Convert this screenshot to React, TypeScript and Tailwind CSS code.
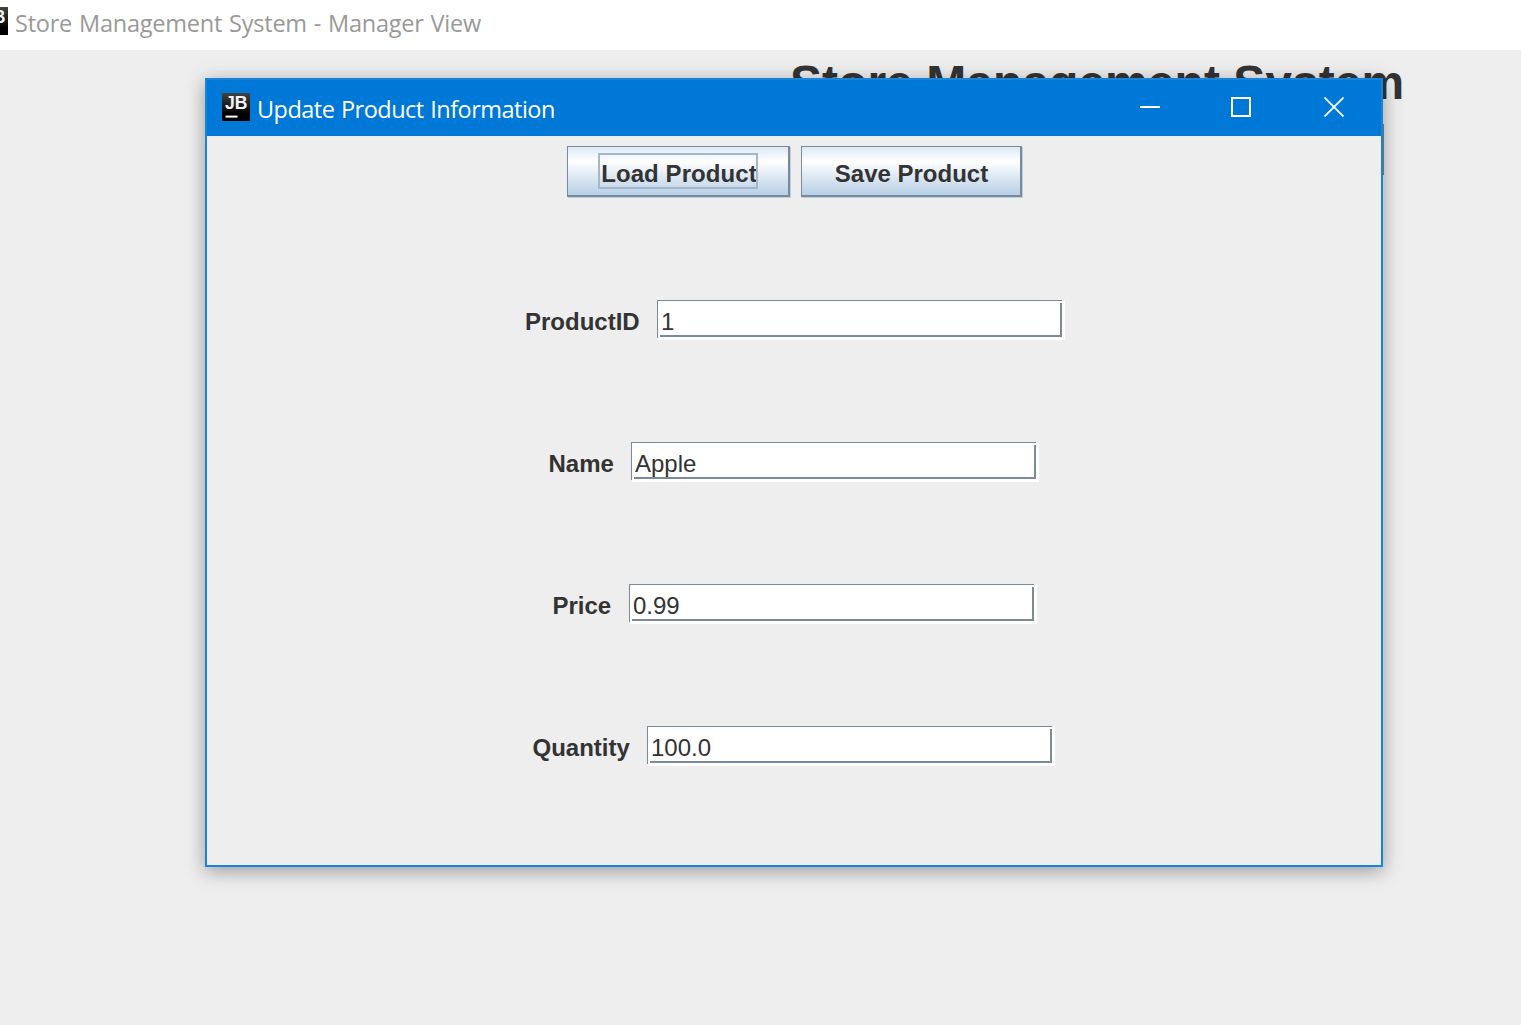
import React from "react";

function AppIcon() {
  return (
    <svg width="28" height="28" viewBox="0 0 28 28" className="block shrink-0" aria-hidden="true">
      <defs>
        <linearGradient id="iconShade" x1="0" y1="0" x2="0" y2="1">
          <stop offset="0" stopColor="#434343" />
          <stop offset="0.75" stopColor="#000000" />
        </linearGradient>
      </defs>
      <rect width="28" height="28" fill="url(#iconShade)" />
      <text
        x="3"
        y="16"
        fill="#f4f4f4"
        fontFamily="Liberation Sans, sans-serif"
        fontWeight="700"
        fontSize="17.5"
        textLength="22.5"
        lengthAdjust="spacingAndGlyphs"
      >
        JB
      </text>
      <rect x="3.5" y="22.6" width="12" height="2" fill="#ffffff" />
    </svg>
  );
}

function MetalButton({ className, children }: { className: string; children: React.ReactNode }) {
  return (
    <button
      type="button"
      className={`relative flex h-[51px] items-center justify-center border-t border-l border-r-2 border-b-2 border-[#7a8a99] bg-[linear-gradient(to_bottom,#dde8f3_0%,#ffffff_30%,#dde8f3_62%,#b8cfe5_100%)] text-[24px] leading-[28px] font-bold text-[#333333] shadow-[1px_1px_0_0_#b8cfe5] ${className}`}
    >
      {children}
    </button>
  );
}

function Field({ label, value, row, labelWidth }: { label: string; value: string; row: string; labelWidth: string }) {
  return (
    <div className={`flex h-[40px] ${row}`}>
      <div className={`shrink-0 pt-[8px] text-[24px] leading-[28px] font-bold whitespace-nowrap ${labelWidth}`}>
        {label}
      </div>
      <div className="relative h-[40px] w-[408px] shrink-0 bg-white pt-[8px] pl-[4px] text-[24px] leading-[28px] [clip-path:polygon(0_0,405px_0,405px_3px,408px_0,408px_40px,0_40px,3px_37px,1px_38px,0_38px)]">
        {value}
        <span className="absolute top-0 left-0 h-px w-[405px] bg-[#7a8a99]" />
        <span className="absolute top-0 left-0 h-[38px] w-px bg-[#7a8a99]" />
        <span className="absolute top-[3px] left-[403px] h-[34px] w-[2px] bg-[#7a8a99]" />
        <span className="absolute top-[35px] left-[3px] h-[2px] w-[402px] bg-[#7a8a99]" />
      </div>
    </div>
  );
}

export default function App() {
  return (
    <div className="relative h-[1025px] w-[1521px] overflow-hidden bg-[#eeeeee] font-['Liberation_Sans',Arial,sans-serif] text-[#333333]">
      <header className="flex h-[50px] items-start bg-white">
        <div className="mt-[7px] -ml-[20px]">
          <AppIcon />
        </div>
        <div className="mt-[7px] ml-[7px] font-['Open_Sans',sans-serif] text-[23.5px] leading-[32px] tracking-[-0.22px] [word-spacing:1px] whitespace-nowrap text-[#999999]">
          Store Management System - Manager View
        </div>
      </header>
      <main className="flex flex-col pt-[9px] pl-[790px]">
        <h1 className="text-[48px] leading-[48px] font-bold tracking-[0.03px] whitespace-nowrap">Store Management System</h1>
        <div className="mt-[17px] h-[51px] w-[594px] border border-[#7a8a99]" />
      </main>

      {/* Dialog window floating over the main frame */}
      <section className="absolute top-[78px] left-[205px] flex h-[789px] w-[1178px] flex-col border-2 border-[#1883d7] bg-[#eeeeee] shadow-[0_4px_18px_0_rgba(0,0,0,0.36)]">
        <div className="flex h-[56px] shrink-0 items-start bg-[#0078d7] text-white">
          <div className="mt-[13px] ml-[15px]">
            <AppIcon />
          </div>
          <div className="mt-[13px] ml-[7px] font-['Open_Sans',sans-serif] text-[23.5px] leading-[32px] tracking-[-0.52px] [word-spacing:1px] whitespace-nowrap">
            Update Product Information
          </div>
          <div className="mt-[17px] mr-[37px] ml-auto flex gap-[71px]">
            <svg width="20" height="20" viewBox="0 0 20 20"><path d="M0 10H20" stroke="white" strokeWidth="2" /></svg>
            <svg width="20" height="20" viewBox="0 0 20 20"><path d="M1 1H19V19H1Z" fill="none" stroke="white" strokeWidth="2" /></svg>
            <svg className="ml-[2px]" width="20" height="20" viewBox="0 0 20 20"><path d="M0.5 0.5L19.5 19.5M19.5 0.5L0.5 19.5" stroke="white" strokeWidth="1.8" /></svg>
          </div>
        </div>
        <div className="flex gap-[11px] pt-[10px] pl-[360px]">
          <MetalButton className="w-[223px]">
            <span className="mt-[5px] ml-[2px] tracking-[0.08px] whitespace-nowrap">Load Product</span>
            <span className="absolute top-[6px] left-[30px] h-[36px] w-[160px] border-2 border-[#a3b8cc]" />
          </MetalButton>
          <MetalButton className="w-[221px]">
            <span className="mt-[5px] ml-[1px] whitespace-nowrap">Save Product</span>
          </MetalButton>
        </div>
        <div className="mt-[103px] flex flex-col gap-[102px]">
          <Field label="ProductID" value="1" row="pl-[318px]" labelWidth="w-[132px]" />
          <Field label="Name" value="Apple" row="pl-[341.5px]" labelWidth="w-[82.5px]" />
          <Field label="Price" value="0.99" row="pl-[345.5px]" labelWidth="w-[76.5px]" />
          <Field label="Quantity" value="100.0" row="pl-[325.5px]" labelWidth="w-[114.5px]" />
        </div>
      </section>
    </div>
  );
}
